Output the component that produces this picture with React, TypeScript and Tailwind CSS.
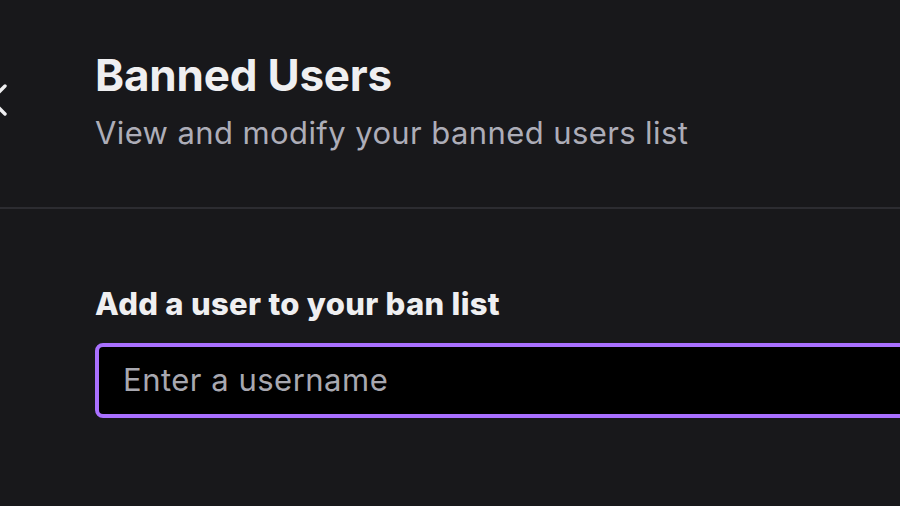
export default function App() {
  return (
    <div className="w-[900px] h-[506px] overflow-hidden bg-[#18181b] font-['Inter',sans-serif] text-[#efeff1]">
      <div className="flex h-[207px]">
        <div className="w-[95px] shrink-0 relative">
          <svg
            className="absolute left-[-25px] top-[84px]"
            width="32"
            height="32"
            viewBox="0 0 32 32"
            fill="none"
            stroke="#efeff1"
            strokeWidth="3.4"
            strokeLinecap="round"
          >
            <path d="M2 2L30 30M30 2L2 30" />
          </svg>
        </div>
        <div className="flex flex-col pt-[49px]">
          <h1 className="text-[44px] font-bold leading-[52px] tracking-[-0.2px]">Banned Users</h1>
          <p className="mt-[12px] text-[31px] leading-[40px] tracking-[0.4px] text-[#adadb8]">View and modify your banned users list</p>
        </div>
      </div>
      <div className="h-[2px] bg-[#2c2c31]" />
      <div className="pl-[95px] pt-[75px]">
        <label className="block text-[31px] font-extrabold leading-[40px] tracking-[0.3px]">Add a user to your ban list</label>
        <div className="mt-[19px] w-[830px] h-[75px] rounded-[8px] border-4 border-[#a970ff] bg-black flex items-center pl-[24px]">
          <input
            className="w-full bg-transparent outline-none text-[31px] tracking-[0.5px] text-[#efeff1] placeholder:text-[#a8a8b0]"
            placeholder="Enter a username"
          />
        </div>
      </div>
    </div>
  );
}
